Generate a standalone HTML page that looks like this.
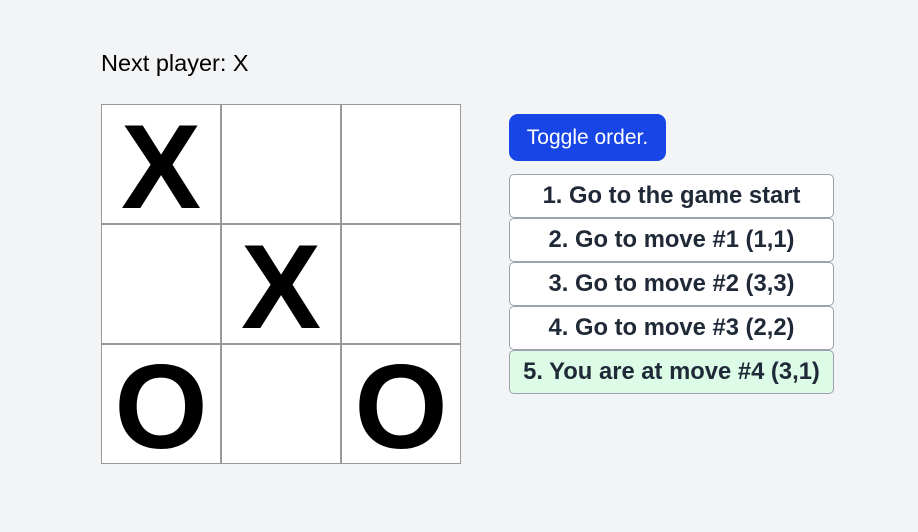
<!DOCTYPE html>
<html><head><style>
body{margin:0;width:918px;height:532px;background:#f3f4f6;font-family:"Liberation Sans",Arial,sans-serif;position:relative;overflow:hidden}
.status{position:absolute;left:101px;top:48px;font-size:23.5px;color:#000;line-height:30px}
.board{position:absolute;left:101px;top:104px;width:360px;height:360px}
.cell{position:absolute;width:118px;height:118px;background:#fff;border:1px solid #999;font-weight:bold;font-size:120px;line-height:124px;text-align:center;color:#000}
.toggle{position:absolute;left:509px;top:114px;width:157px;height:47px;background:#1745e6;border-radius:9px;color:#fff;font-size:21px;line-height:47px;text-align:center}
.mv{position:absolute;left:509px;width:323px;height:42px;background:#fff;border:1px solid #9ca3af;border-radius:5px;color:#1f2937;font-weight:bold;font-size:23.8px;line-height:42px;text-align:center;white-space:nowrap}
</style></head><body>
<div class="status">Next player: X</div>
<div class="board">
<div class="cell" style="left:0;top:0">X</div>
<div class="cell" style="left:120px;top:0"></div>
<div class="cell" style="left:240px;top:0"></div>
<div class="cell" style="left:0;top:120px"></div>
<div class="cell" style="left:120px;top:120px">X</div>
<div class="cell" style="left:240px;top:120px"></div>
<div class="cell" style="left:0;top:240px">O</div>
<div class="cell" style="left:120px;top:240px"></div>
<div class="cell" style="left:240px;top:240px">O</div>
</div>
<div class="toggle">Toggle order.</div>
<div class="mv" style="top:174px">1. Go to the game start</div>
<div class="mv" style="top:218px">2. Go to move #1 (1,1)</div>
<div class="mv" style="top:262px">3. Go to move #2 (3,3)</div>
<div class="mv" style="top:306px">4. Go to move #3 (2,2)</div>
<div class="mv" style="top:350px;background:#dcfce7">5. You are at move #4 (3,1)</div>
</body></html>
